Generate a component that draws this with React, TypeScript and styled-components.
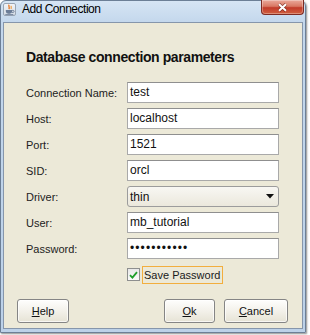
import React from 'react';
import styled, { createGlobalStyle } from 'styled-components';

// Dialog "Add Connection" (Swing Windows LAF inside an Aero Basic frame)

const GlobalStyle = createGlobalStyle`
  html, body {
    margin: 0;
    padding: 0;
    background: #ffffff;
  }
  body {
    font-family: "Liberation Sans", Arial, sans-serif;
    color: #1a1a1a;
  }
  * {
    box-sizing: border-box;
  }
`;

const fields = [
  { label: 'Connection Name:', value: 'test' },
  { label: 'Host:', value: 'localhost' },
  { label: 'Port:', value: '1521' },
  { label: 'SID:', value: 'orcl' },
  { label: 'Driver:', value: 'thin', combo: true },
  { label: 'User:', value: 'mb_tutorial' },
  { label: 'Password:', value: '•••••••••••', secret: true },
];

const JavaIcon = () => (
  <IconSvg viewBox="0 0 13 13">
    <defs>
      <linearGradient id="iconBg" x1="0" y1="0" x2="0" y2="1">
        <stop offset="0" stopColor="#f3f5f8" />
        <stop offset="1" stopColor="#d3dbe4" />
      </linearGradient>
    </defs>
    <rect x="0.5" y="0.5" width="12" height="12" rx="1.5" fill="url(#iconBg)" stroke="#9aa6b4" />
    <path d="M6.2 1.8 C4.8 3.4 7.4 4.3 5.8 6.2" fill="none" stroke="#e8741c" strokeWidth="1.3" />
    <path d="M8.4 2.8 C7.4 3.9 9 4.5 7.9 5.8" fill="none" stroke="#f09a3a" strokeWidth="1.1" />
    <path d="M2.8 7 h6.4 v1.3 a2.4 2.4 0 0 1 -2.4 2.4 h-1.6 a2.4 2.4 0 0 1 -2.4 -2.4 z" fill="#6b7d97" />
    <path d="M9.2 7.4 h0.9 a1 1 0 0 1 0 2 h-1.1" fill="none" stroke="#6b7d97" strokeWidth="0.9" />
    <path d="M2.3 11.6 h8" stroke="#6b7d97" strokeWidth="0.9" />
  </IconSvg>
);

const App: React.FC = () => {
  return (
    <Page>
      <GlobalStyle />
      <Window>
        <TitleBar>
          <JavaIcon />
          <TitleText>Add Connection</TitleText>
          <CloseButton>
            <svg width="11" height="9" viewBox="0 0 11 9">
              <path d="M2 1.2 L9 7.8 M9 1.2 L2 7.8" stroke="#5b1a12" strokeWidth="3.4" strokeOpacity="0.6" />
              <path d="M2 1.2 L9 7.8 M9 1.2 L2 7.8" stroke="#ffffff" strokeWidth="2" />
            </svg>
          </CloseButton>
        </TitleBar>

        <Panel>
          <Heading>Database connection parameters</Heading>

          <Form>
            {fields.map((f) => (
              <React.Fragment key={f.label}>
                <Label>{f.label}</Label>
                {f.combo ? (
                  <Combo>
                    <span>{f.value}</span>
                    <svg width="8" height="5" viewBox="0 0 8 5">
                      <path d="M0 0 H8 L4 4.5 Z" fill="#111" />
                    </svg>
                  </Combo>
                ) : (
                  <TextField $secret={f.secret}>{f.value}</TextField>
                )}
              </React.Fragment>
            ))}
            <CheckRow>
              <CheckBox>
                <svg width="9" height="8" viewBox="0 0 9 8">
                  <path d="M1 4.2 L3.4 6.6 L8 1.2" fill="none" stroke="#1f9e2c" strokeWidth="1.8" />
                </svg>
              </CheckBox>
              <FocusLabel>Save Password</FocusLabel>
            </CheckRow>
          </Form>

          <ButtonRow>
            <Button $width={52}>
              <u>H</u>elp
            </Button>
            <Spacer />
            <Button $width={51}>
              <u>O</u>k
            </Button>
            <Button $width={64}>
              <u>C</u>ancel
            </Button>
          </ButtonRow>
        </Panel>
      </Window>
    </Page>
  );
};

const Page = styled.div`
  width: 310px;
  height: 335px;
  overflow: hidden;
  background: #ffffff;
`;

const Window = styled.div`
  width: 306px;
  height: 333px;
  display: flex;
  flex-direction: column;
  padding: 0 2px 3px 2px;
  border: 1px solid #6c7f96;
  border-radius: 6px 6px 0 0;
  background: linear-gradient(180deg, #d6e5f4 0px, #c3d7ec 22px, #bcd1e8 100%);
  box-shadow: 1px 1px 2px rgba(0, 0, 0, 0.45);
`;

const TitleBar = styled.div`
  height: 21px;
  flex-shrink: 0;
  display: flex;
  align-items: flex-start;
`;

const IconSvg = styled.svg`
  width: 13px;
  height: 13px;
  margin-top: 2px;
  flex-shrink: 0;
`;

const TitleText = styled.span`
  margin-left: 6px;
  font-size: 12px;
  line-height: 16px;
  letter-spacing: -0.5px;
  color: #000000;
`;

const CloseButton = styled.div`
  margin: -1px -1px 0 auto;
  width: 43px;
  height: 15px;
  display: flex;
  align-items: center;
  justify-content: center;
  border: 1px solid #7d2b22;
  border-top: none;
  border-radius: 0 0 4px 4px;
  background: linear-gradient(180deg, #eaa99b 0%, #d97863 45%, #c23b2a 55%, #d0603f 100%);
  box-shadow: inset 0 0 0 1px rgba(255, 255, 255, 0.3);
`;

const Panel = styled.div`
  flex: 1;
  display: flex;
  flex-direction: column;
  background: #ece9d8;
  border: 1px solid #8696ab;
  padding: 26px 14px 5px 13px;
`;

const Heading = styled.h2`
  margin: 0 0 16px 9px;
  font-size: 14px;
  line-height: 17px;
  font-weight: bold;
  letter-spacing: -0.4px;
  color: #111111;
`;

const Form = styled.div`
  display: grid;
  grid-template-columns: 101px 152px;
  grid-auto-rows: 21px;
  row-gap: 5px;
  align-items: center;
  margin-left: 9px;
`;

const Label = styled.span`
  font-size: 11px;
  color: #222222;
`;

const TextField = styled.div<{ $secret?: boolean }>`
  height: 21px;
  padding: 0 2px;
  background: #ffffff;
  border: 1px solid #a9a9a9;
  border-top-color: #8f8f8f;
  font-size: 12px;
  line-height: 19px;
  color: #111111;
  letter-spacing: ${({ $secret }) => ($secret ? '1.1px' : '0')};
`;

const Combo = styled.div`
  height: 21px;
  display: flex;
  align-items: center;
  justify-content: space-between;
  padding: 0 4px 0 2px;
  border: 1px solid #9c9c9c;
  border-radius: 3px;
  background: linear-gradient(180deg, #f8f7f3 0%, #ebe8dc 100%);
  font-size: 12px;
  color: #111111;
`;

const CheckRow = styled.div`
  grid-column: 2;
  display: flex;
  align-items: center;
`;

const CheckBox = styled.div`
  width: 13px;
  height: 13px;
  display: flex;
  align-items: center;
  justify-content: center;
  border: 1px solid #8e8f8f;
  background: linear-gradient(180deg, #e8e8e8 0%, #fafafa 100%);
`;

const FocusLabel = styled.span`
  margin-left: 2px;
  height: 18px;
  padding: 0 2px 0 1px;
  border: 1px solid #f2ae3e;
  font-size: 11px;
  line-height: 16px;
  color: #1a1a1a;
`;

const ButtonRow = styled.div`
  margin-top: auto;
  display: flex;
  gap: 9px;
`;

const Spacer = styled.div`
  flex: 1;
`;

const Button = styled.div<{ $width: number }>`
  width: ${({ $width }) => $width}px;
  height: 24px;
  display: flex;
  align-items: center;
  justify-content: center;
  border: 1px solid #858585;
  border-radius: 3px;
  background: linear-gradient(180deg, #fefefd 0%, #f3f1ea 50%, #e6e3d5 100%);
  box-shadow: inset 0 0 0 1px rgba(255, 255, 255, 0.7);
  font-size: 11px;
  color: #111111;

  u {
    text-underline-offset: 1px;
  }
`;

export default App;
